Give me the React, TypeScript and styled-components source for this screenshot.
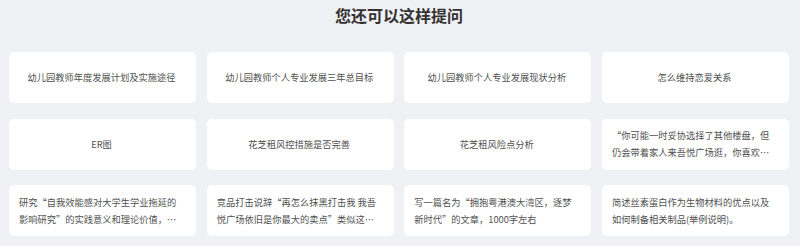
import React from 'react';
import styled, { createGlobalStyle } from 'styled-components';

const GlobalStyle = createGlobalStyle`
  html, body {
    margin: 0;
    padding: 0;
    background: #f0f1f4;
  }

  body {
    font-family: 'Noto Sans CJK SC', 'Noto Sans', sans-serif;
  }
`;

const StyledPage = styled.div`
  display: flex;
  flex-flow: column;
  width: 800px;
  height: 246px;
  padding: 0 11px 0 9px;
  box-sizing: border-box;
  overflow: hidden;
`;

const StyledTitle = styled.h2`
  margin: 0 0 22px 0;
  height: 30px;
  line-height: 30px;
  text-align: center;
  font-size: 16px;
  font-weight: 700;
  color: #333333;
`;

const StyledGrid = styled.div`
  display: grid;
  grid-template-columns: repeat(4, 1fr);
  grid-auto-rows: 51px;
  column-gap: 10.67px;
  row-gap: 15.5px;
`;

const StyledCard = styled.div`
  display: flex;
  justify-content: center;
  align-items: center;
  padding: 0 12px 0 10px;
  background-color: #ffffff;
  border-radius: 5px;
  cursor: pointer;

  &:hover {
    background-color: #f7f8fa;
  }
`;

const StyledCardText = styled.div`
  font-size: 9.25px;
  line-height: 17px;
  color: #505050;
  text-align: left;
  display: -webkit-box;
  -webkit-box-orient: vertical;
  -webkit-line-clamp: 2;
  overflow: hidden;
  word-break: break-all;
`;

const questions: string[] = [
  '幼儿园教师年度发展计划及实施途径',
  '幼儿园教师个人专业发展三年总目标',
  '幼儿园教师个人专业发展现状分析',
  '怎么维持恋爱关系',
  'ER图',
  '花芝租风控措施是否完善',
  '花芝租风险点分析',
  '“你可能一时妥协选择了其他楼盘，但仍会带着家人来吾悦广场逛，你喜欢吾悦的氛围，却没能住进吾悦”',
  '研究“自我效能感对大学生学业拖延的影响研究”的实践意义和理论价值，以及研究的创新之处',
  '竞品打击说辞“再怎么抹黑打击我 我吾悦广场依旧是你最大的卖点”类似这句话再写几句',
  '写一篇名为“拥抱粤港澳大湾区，逐梦新时代”的文章，1000字左右',
  '简述丝素蛋白作为生物材料的优点以及如何制备相关制品(举例说明)。',
];

const App = () => (
  <>
    <GlobalStyle />
    <StyledPage>
      <StyledTitle>您还可以这样提问</StyledTitle>
      <StyledGrid>
        {questions.map((q) => (
          <StyledCard key={q}>
            <StyledCardText>{q}</StyledCardText>
          </StyledCard>
        ))}
      </StyledGrid>
    </StyledPage>
  </>
);

export default App;
